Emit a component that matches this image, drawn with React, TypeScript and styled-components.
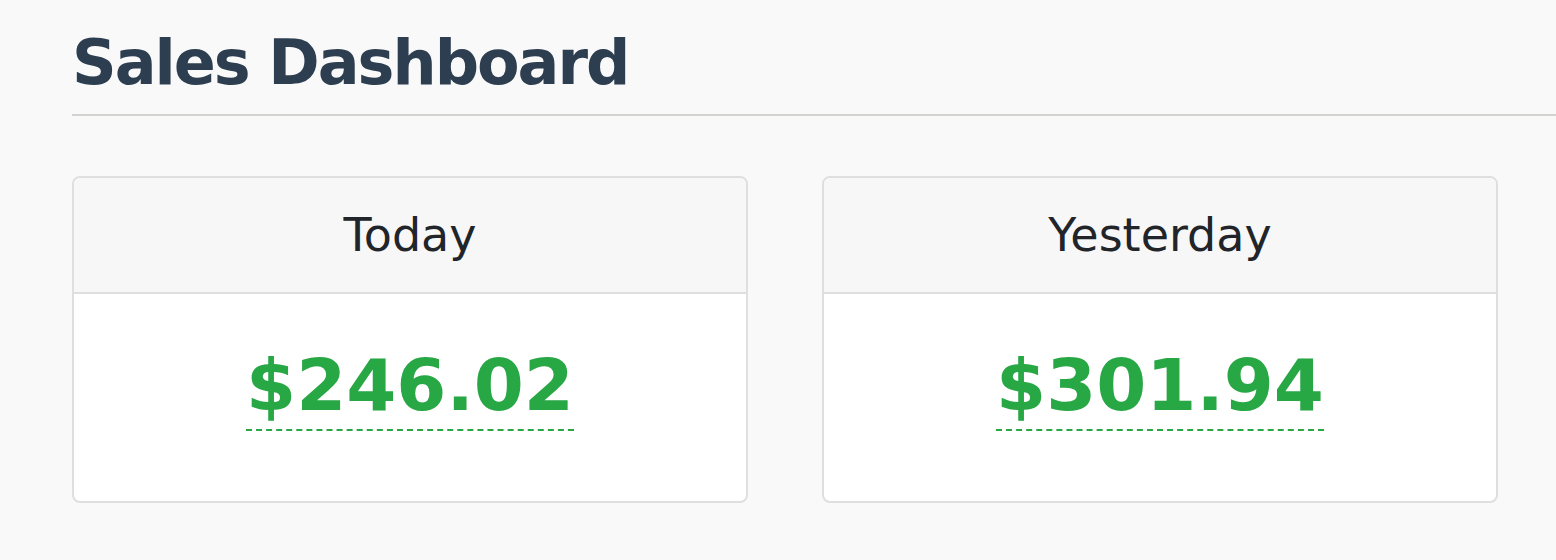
import styled, { createGlobalStyle } from 'styled-components'

const GlobalStyle = createGlobalStyle`
  html, body {
    margin: 0;
    padding: 0;
    background: #f9f9f9;
  }

  body {
    font-family: "DejaVu Sans", Verdana, sans-serif;
    color: #212529;
  }
`

type SalesCardProps = {
  label: string
  amount: string
}

function SalesCard({ label, amount }: SalesCardProps) {
  return (
    <Card>
      <CardHeader>{label}</CardHeader>
      <CardBody>
        <Amount title={`${label} sales`}>{amount}</Amount>
      </CardBody>
    </Card>
  )
}

export default function App() {
  return (
    <>
      <GlobalStyle />
      <Page>
        <Title>Sales Dashboard</Title>
        <CardGrid>
          <SalesCard label="Today" amount="$246.02" />
          <SalesCard label="Yesterday" amount="$301.94" />
        </CardGrid>
      </Page>
    </>
  )
}

const Page = styled.main`
  padding: 26px 0 0 72px;
`

const Title = styled.h1`
  margin: 0;
  padding-bottom: 14px;
  border-bottom: 2px solid #d3d3cf;
  color: #2c3e50;
  font-size: 62px;
  font-weight: 700;
  line-height: 1.2;
  letter-spacing: -2px;
`

const CardGrid = styled.div`
  display: grid;
  grid-template-columns: 1fr 1fr;
  gap: 74px;
  width: 1426px;
  margin-top: 60px;
`

const Card = styled.section`
  display: flex;
  flex-direction: column;
  height: 323px;
  border: 2px solid #dfdfdf;
  border-radius: 8px;
  background: #ffffff;
  overflow: hidden;
`

const CardHeader = styled.header`
  display: flex;
  align-items: center;
  justify-content: center;
  height: 114px;
  border-bottom: 2px solid #dfdfdf;
  background: #f7f7f7;
  font-size: 46px;
`

const CardBody = styled.div`
  flex: 1;
  display: flex;
  align-items: center;
  justify-content: center;
  padding-bottom: 23px;
`

const Amount = styled.abbr`
  color: #28a745;
  font-size: 72px;
  font-weight: 700;
  line-height: 1.2;
  text-decoration: none;
  border-bottom: 2px dashed #28a745;
  cursor: help;
`
